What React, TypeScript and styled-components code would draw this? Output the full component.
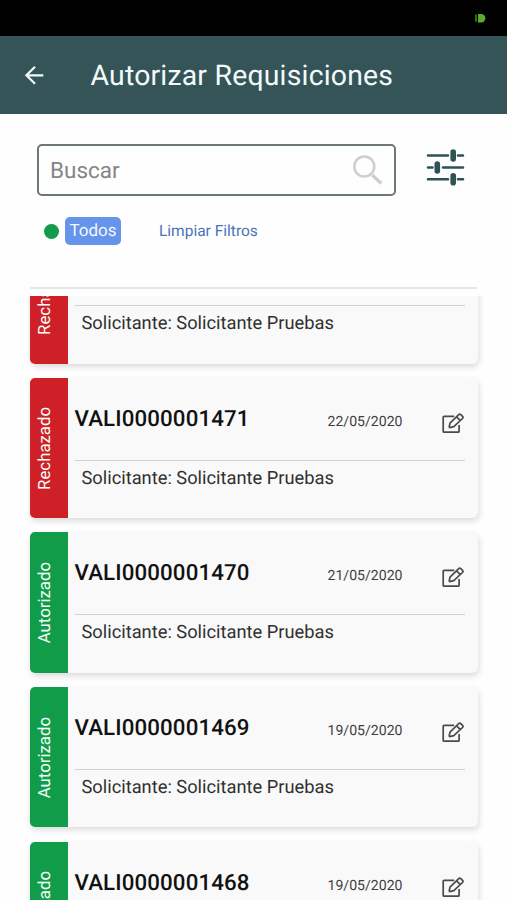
import React from "react";
import styled, { createGlobalStyle } from "styled-components";

const GlobalStyle = createGlobalStyle`
  * { box-sizing: border-box; }
  body {
    margin: 0;
    background: #fefefe;
    font-family: Roboto, "Liberation Sans", sans-serif;
    text-rendering: geometricPrecision;
  }
`;

const Screen = styled.div`
  display: flex;
  flex-direction: column;
  width: 507px;
  height: 900px;
  overflow: hidden;
  background: #fefefe;
`;

const StatusBar = styled.div`
  flex: none;
  height: 36px;
  background: #000;
  display: flex;
  justify-content: flex-end;
  padding: 13px 21px 0 0;
`;

const Header = styled.header`
  flex: none;
  height: 78px;
  display: flex;
  align-items: center;
  background: #355458;
  color: #f3fafb;
  padding-left: 24px;
`;

const Title = styled.h1`
  margin: 2px 0 0 45.5px;
  font-size: 28.4px;
  line-height: 32px;
  font-weight: 400;
  letter-spacing: 0.2px;
  white-space: nowrap;
`;

const SearchRow = styled.div`
  flex: none;
  display: flex;
  align-items: flex-start;
  padding: 30px 0 0 37px;
`;

const SearchBox = styled.div`
  width: 359px;
  height: 52px;
  border: 2px solid #6b7778;
  border-radius: 5px;
  display: flex;
  align-items: center;
  justify-content: space-between;
  padding: 1px 10px 0 11px;
`;

const Placeholder = styled.span`
  color: #858585;
  font-size: 22.5px;
`;

const FilterButton = styled.button`
  border: 0;
  padding: 0;
  margin: 4px 0 0 30px;
  background: none;
  display: flex;
`;

const Filters = styled.div`
  flex: none;
  height: 28px;
  margin-top: 21px;
  padding-left: 44px;
  display: flex;
  align-items: center;
`;

const Dot = styled.span`
  width: 15px;
  height: 15px;
  border-radius: 50%;
  background: #109c49;
`;

const Chip = styled.span`
  margin-left: 6px;
  width: 56px;
  height: 28px;
  border-radius: 5px;
  background: #6694ea;
  color: #f4f8ff;
  font-size: 17px;
  line-height: 29px;
  text-align: center;
`;

const ClearLink = styled.a`
  margin-left: 38px;
  color: #4b74b8;
  font-size: 15.5px;
  white-space: nowrap;
`;

const Divider = styled.div`
  flex: none;
  height: 2px;
  margin: 42px 30px 0;
  background: #e6e6e6;
`;

const List = styled.main`
  flex: 1;
  min-height: 0;
  margin-top: 7px;
  padding: 0 29.5px 0 30px;
  overflow: hidden;
`;

const Cards = styled.div`
  display: flex;
  flex-direction: column;
  gap: 14.1px;
  margin-top: -72.8px;
`;

const Card = styled.article`
  flex: none;
  height: 140.5px;
  display: flex;
  background: #f9f9f9;
  border-radius: 6px;
  box-shadow: 1px 3px 6px rgba(0, 0, 0, 0.14);
`;

const Status = styled.div<{ $rejected: boolean }>`
  flex: none;
  width: 37.5px;
  border-radius: 5px 0 0 5px;
  background: ${(p) => (p.$rejected ? "#cf2027" : "#109c49")};
  color: #f6fff9;
  display: flex;
  align-items: center;
  justify-content: center;
  padding-right: 7px;
`;

const StatusText = styled.span`
  writing-mode: vertical-rl;
  transform: rotate(180deg);
  font-size: 16.8px;
  line-height: 20px;
  white-space: nowrap;
`;

const Body = styled.div`
  flex: 1;
  padding: 0 15px 0 7px;
`;

const Top = styled.div`
  height: 83px;
  display: flex;
  align-items: flex-start;
  border-bottom: 1.5px solid #d0d0d0;
`;

const Code = styled.strong`
  flex: none;
  width: 253px;
  padding-top: 27px;
  font-size: 22.3px;
  line-height: 28px;
  font-weight: 500;
  letter-spacing: 0.12px;
  color: #111;
`;

const DateText = styled.time`
  flex: none;
  width: 114px;
  padding-top: 34px;
  font-size: 14.1px;
  line-height: 20px;
  color: #3f3f3f;
`;

const EditButton = styled.button`
  flex: none;
  border: 0;
  padding: 0;
  margin-top: 35px;
  background: none;
  display: flex;
`;

const Requester = styled.p`
  margin: 0;
  padding: 7px 0 0 7px;
  font-size: 18.3px;
  line-height: 22px;
  color: #303030;
  white-space: nowrap;
`;

const BatteryIcon = () => (
  <svg width="12" height="11" viewBox="0 0 12 11">
    <path d="M4 1h3.2a4.2 4.2 0 0 1 0 8.4H4z" fill="#5cab2c" />
    <path d="M2 1.5v7.3" stroke="#438021" strokeWidth="1.6" />
  </svg>
);

const BackIcon = () => (
  <svg width="21" height="20" viewBox="0 0 21 20" fill="none" stroke="#f3fafb" strokeWidth="2.2">
    <path d="M19.3 10.3H2.8M11 1.7 2.4 10.3l8.6 8.4" />
  </svg>
);

const SearchIcon = () => (
  <svg width="32" height="32" viewBox="0 0 32 32" fill="none" stroke="#cfcfcf">
    <circle cx="12.3" cy="11.5" r="10" strokeWidth="2.6" />
    <path d="m20.3 20 9 8.5" strokeWidth="3.3" />
  </svg>
);

const SlidersIcon = () => (
  <svg width="39" height="40" viewBox="0 0 39 40" fill="none" stroke="#2f5255" strokeLinecap="round">
    <path
      d="M2 7.5h20M32 7.5h5M2 19.5h4.5M17 19.5h20M2 31.3h20M32 31.3h5"
      strokeWidth="2.6"
    />
    <path d="M27.2 4v7M11.3 16v7M27.2 27.8v7" strokeWidth="5.6" />
  </svg>
);

const EditIcon = () => (
  <svg width="23" height="22" viewBox="0 0 23 22" fill="none" stroke="#4a4a4a" strokeWidth="1.7" strokeLinejoin="round">
    <path d="M12.2 3.4H2.2a1 1 0 0 0-1 1v13.8a1 1 0 0 0 1 1h13.9a1 1 0 0 0 1-1v-6.3" />
    <path d="m7.2 13.9.8-3.8 8.7-8.4a1.5 1.5 0 0 1 2.1 0l1.7 1.7a1.5 1.5 0 0 1 0 2.1l-8.7 8.2-4.1.9zM14.6 3.9l3.7 3.7" />
  </svg>
);

const requisitions = [
  { code: "VALI0000001472", date: "22/05/2020", status: "Rechazado" },
  { code: "VALI0000001471", date: "22/05/2020", status: "Rechazado" },
  { code: "VALI0000001470", date: "21/05/2020", status: "Autorizado" },
  { code: "VALI0000001469", date: "19/05/2020", status: "Autorizado" },
  { code: "VALI0000001468", date: "19/05/2020", status: "Autorizado" },
];

export default function App() {
  return (
    <Screen>
      <GlobalStyle />
      <StatusBar><BatteryIcon /></StatusBar>
      <Header>
        <BackIcon />
        <Title>Autorizar Requisiciones</Title>
      </Header>
      <SearchRow>
        <SearchBox>
          <Placeholder>Buscar</Placeholder>
          <SearchIcon />
        </SearchBox>
        <FilterButton aria-label="Filtros"><SlidersIcon /></FilterButton>
      </SearchRow>
      <Filters>
        <Dot />
        <Chip>Todos</Chip>
        <ClearLink>Limpiar Filtros</ClearLink>
      </Filters>
      <Divider />
      <List>
        <Cards>
          {requisitions.map((r) => (
            <Card key={r.code}>
              <Status $rejected={r.status === "Rechazado"}>
                <StatusText>{r.status}</StatusText>
              </Status>
              <Body>
                <Top>
                  <Code>{r.code}</Code>
                  <DateText>{r.date}</DateText>
                  <EditButton aria-label="Editar"><EditIcon /></EditButton>
                </Top>
                <Requester>Solicitante: Solicitante Pruebas</Requester>
              </Body>
            </Card>
          ))}
        </Cards>
      </List>
    </Screen>
  );
}
